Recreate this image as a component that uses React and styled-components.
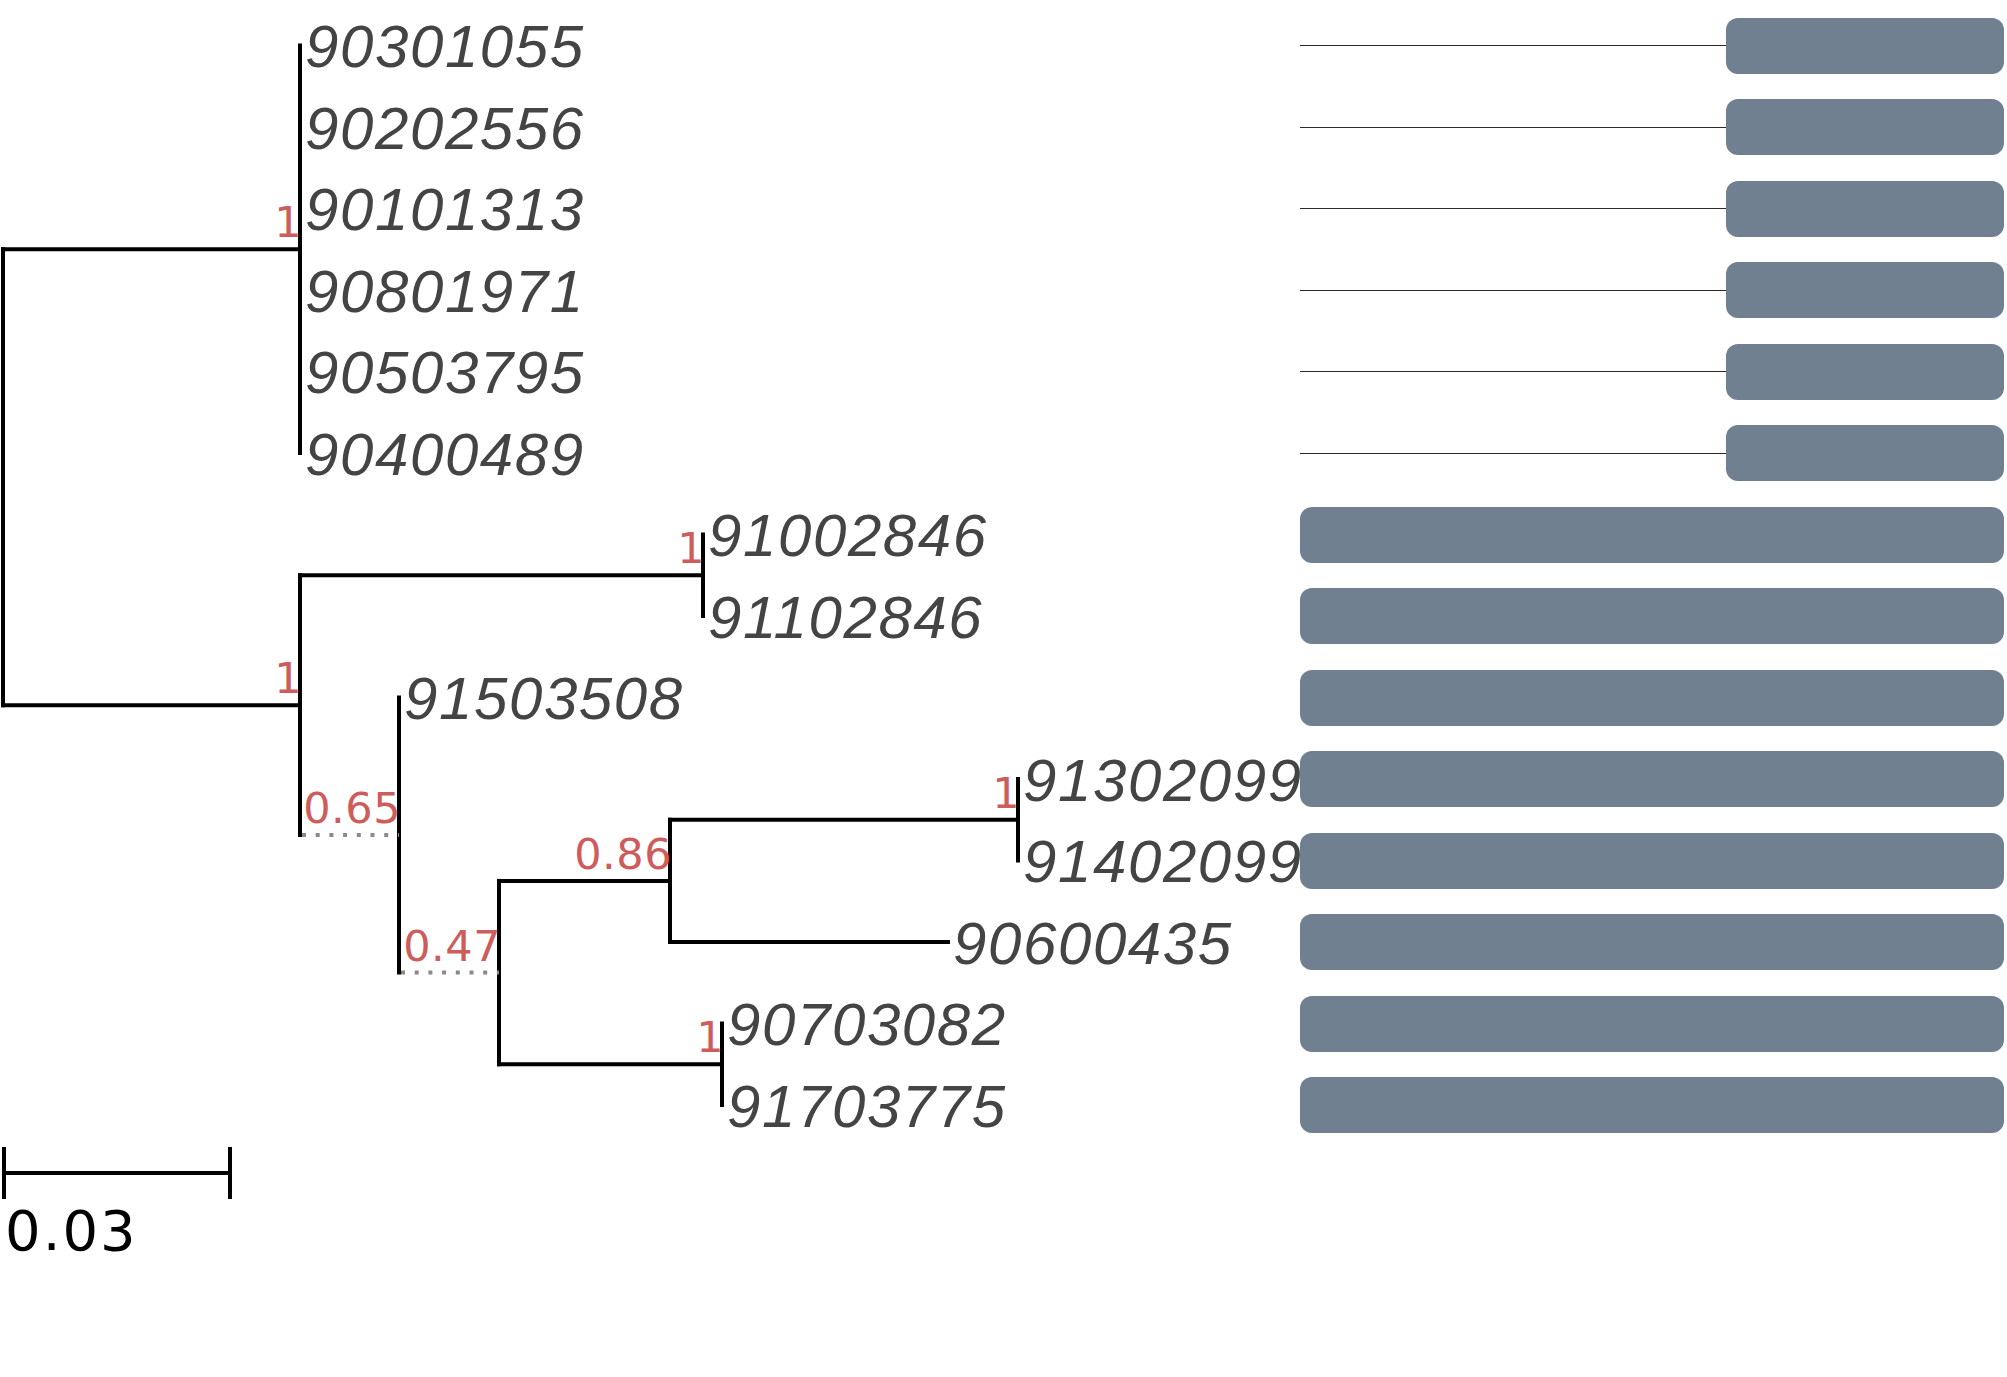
import React from "react";
import styled, { createGlobalStyle } from "styled-components";

const GlobalStyle = createGlobalStyle`
  html,
  body {
    margin: 0;
    padding: 0;
    background: #ffffff;
  }
`;

const Page = styled.div`
  display: flex;
  align-items: flex-start;
  width: 2007px;
  height: 1377px;
  background: #ffffff;
  overflow: hidden;
`;

const TreeCanvas = styled.svg`
  display: block;
  flex: none;
  width: 1300px;
  height: 1280px;
  overflow: visible;
`;

const Branch = styled.path`
  fill: none;
  stroke: ${(p) => (p.$dotted ? "#8a8a8a" : "#000000")};
  stroke-width: 4;
  stroke-linecap: ${(p) => (p.$dotted ? "butt" : "square")};
  stroke-dasharray: ${(p) => (p.$dotted ? "4 9.7" : "none")};
`;

const LeafName = styled.text`
  font-family: "Liberation Sans", Arial, sans-serif;
  font-style: italic;
  font-size: 60px;
  letter-spacing: 1.6px;
  fill: #444444;
`;

const Support = styled.text`
  font-family: "DejaVu Sans", sans-serif;
  font-size: 43px;
  letter-spacing: 0.5px;
  fill: #cd5c5c;
  text-anchor: end;
`;

const ScaleLabel = styled.text`
  font-family: "DejaVu Sans", sans-serif;
  font-size: 56px;
  letter-spacing: 2px;
  fill: #000000;
`;

const BarColumn = styled.div`
  flex: none;
  width: 704px;
  padding-top: 4.75px;
  display: flex;
  flex-direction: column;
`;

const BarRow = styled.div`
  height: 81.5px;
  display: flex;
  align-items: center;
`;

const Connector = styled.div`
  flex: 1;
  height: 1px;
  background: #2a2a2a;
`;

const Bar = styled.div`
  flex: ${(p) => (p.$full ? "1" : "none")};
  width: ${(p) => (p.$full ? "auto" : "278px")};
  height: 56px;
  border-radius: 12px;
  background: #708090;
`;

const ROW_TOP = 45.5;
const ROW_STEP = 81.5;
const rowY = (i) => ROW_TOP + i * ROW_STEP;

const leaves = [
  "90301055",
  "90202556",
  "90101313",
  "90801971",
  "90503795",
  "90400489",
  "91002846",
  "91102846",
  "91503508",
  "91302099",
  "91402099",
  "90600435",
  "90703082",
  "91703775",
];

// x positions are the node places on the canvas (branch length already scaled)
const tree = {
  x: 3,
  children: [
    {
      x: 300,
      support: "1",
      children: [0, 1, 2, 3, 4, 5].map((i) => ({ leaf: i })),
    },
    {
      x: 300,
      support: "1",
      children: [
        { x: 703, support: "1", children: [{ leaf: 6 }, { leaf: 7 }] },
        {
          x: 399,
          support: "0.65",
          dotted: true,
          children: [
            { leaf: 8 },
            {
              x: 499,
              support: "0.47",
              dotted: true,
              children: [
                {
                  x: 670,
                  support: "0.86",
                  children: [
                    { x: 1018, support: "1", children: [{ leaf: 9 }, { leaf: 10 }] },
                    { leaf: 11, x: 948 },
                  ],
                },
                { x: 722, support: "1", children: [{ leaf: 12 }, { leaf: 13 }] },
              ],
            },
          ],
        },
      ],
    },
  ],
};

function layout(node, parentX, out) {
  const x = node.x ?? parentX;
  if (node.leaf !== undefined) {
    const y = rowY(node.leaf);
    out.labels.push(
      <LeafName key={"l" + node.leaf} x={x + 5} y={y + 21.5}>
        {leaves[node.leaf]}
      </LeafName>
    );
    return { x, y };
  }
  const kids = node.children.map((c) => ({ node: c, ...layout(c, x, out) }));
  const top = kids[0].y;
  const bottom = kids[kids.length - 1].y;
  const y = (top + bottom) / 2;
  out.branches.push(
    <Branch key={"v" + out.branches.length} d={`M${x} ${top} V${bottom}`} />
  );
  kids.forEach((k) => {
    if (k.x > x) {
      const from = k.node.dotted ? x + 2 : x;
      out.branches.push(
        <Branch
          key={"h" + out.branches.length}
          $dotted={k.node.dotted}
          d={`M${from} ${k.y} H${k.x}`}
        />
      );
    }
    if (k.node.support) {
      out.supports.push(
        <Support key={"s" + out.supports.length} x={k.x + 2} y={k.y - 12}>
          {k.node.support}
        </Support>
      );
    }
  });
  return { x, y };
}

export default function App() {
  const out = { branches: [], labels: [], supports: [] };
  layout(tree, 0, out);

  return (
    <Page>
      <GlobalStyle />
      <TreeCanvas viewBox="0 0 1300 1280">
        {out.branches}
        {out.supports}
        {out.labels}
        <Branch d="M4 1149 V1197 M4 1173 H230 M230 1149 V1197" />
        <ScaleLabel x={5} y={1250}>
          0.03
        </ScaleLabel>
      </TreeCanvas>
      <BarColumn>
        {leaves.map((name, i) => (
          <BarRow key={name}>
            {i < 6 && <Connector />}
            <Bar $full={i >= 6} />
          </BarRow>
        ))}
      </BarColumn>
    </Page>
  );
}
